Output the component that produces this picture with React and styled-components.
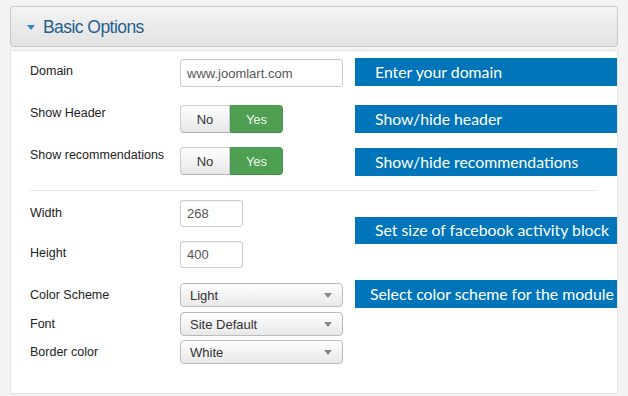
import React from "react";
import styled, { createGlobalStyle } from "styled-components";

const Global = createGlobalStyle`
  html, body { margin: 0; padding: 0; background: #f3f3f3; }
  body { font-family: "Liberation Sans", Arial, sans-serif; }
  * { box-sizing: border-box; }
`;

const Page = styled.div`
  width: 628px;
  height: 396px;
  padding: 6px 10px 0 10px;
  background: #f3f3f3;
  overflow: hidden;
`;

const Header = styled.div`
  height: 41px;
  width: 608px;
  border: 1px solid #c9c9c9;
  border-radius: 3px;
  background: linear-gradient(#f4f4f4, #e2e2e2);
  display: flex;
  align-items: center;
  padding-left: 16px;
  gap: 8px;
`;

const Caret = styled.span`
  width: 0;
  height: 0;
  border-left: 4px solid transparent;
  border-right: 4px solid transparent;
  border-top: 5px solid #2d8ac7;
  margin-top: 2px;
`;

const Title = styled.span`
  font-size: 17.5px;
  letter-spacing: -0.55px;
  color: #1f5f8f;
  line-height: 20px;
`;

const Panel = styled.div`
  margin-top: 3px;
  width: 608px;
  height: 344px;
  background: #fff;
  border: 1px solid #e3e3e3;
  padding: 7px 0 0 19px;
  display: flex;
  flex-direction: column;
`;

const Row = styled.div`
  display: grid;
  grid-template-columns: 325px 1fr;
  align-items: start;
  margin-top: ${(p) => p.$mt || 0}px;
`;

const Fields = styled.div`
  display: flex;
  flex-direction: column;
  gap: ${(p) => p.$gap || 0}px;
`;

const Field = styled.div`
  display: grid;
  grid-template-columns: 150px 175px;
  align-items: start;
  margin-top: ${(p) => p.$mt || 0}px;
`;

const Label = styled.label`
  font-size: 12.5px;
  line-height: 16px;
  color: #222;
  padding-top: ${(p) => p.$pt ?? 4}px;
`;

const TextInput = styled.div`
  width: ${(p) => p.$w}px;
  height: ${(p) => p.$h || 28}px;
  margin-top: ${(p) => p.$mt || 0}px;
  border: 1px solid #cccccc;
  border-radius: 3px;
  background: #fff;
  box-shadow: inset 0 1px 1px rgba(0, 0, 0, 0.06);
  font-size: 13px;
  color: #555;
  display: flex;
  align-items: center;
  padding-left: 6px;
`;

const Toggle = styled.div`
  display: flex;
  width: 103px;
  height: 28px;
`;

const ToggleBtn = styled.div`
  flex: ${(p) => (p.$on ? "0 0 53px" : "0 0 50px")};
  display: flex;
  align-items: center;
  justify-content: center;
  font-size: 13px;
  border: 1px solid ${(p) => (p.$on ? "#479a4a" : "#cccccc")};
  border-radius: ${(p) => (p.$on ? "0 4px 4px 0" : "4px 0 0 4px")};
  background: ${(p) =>
    p.$on ? "#4f9f52" : "linear-gradient(#ffffff, #e6e6e6)"};
  color: ${(p) => (p.$on ? "rgba(255,255,255,0.92)" : "#333")};
  border-bottom-color: ${(p) => (p.$on ? "#3f8c42" : "#b3b3b3")};
`;

const Select = styled.div`
  position: relative;
  width: 163px;
  height: 24px;
  border: 1px solid #bbbbbb;
  border-radius: 4px;
  background: linear-gradient(#ffffff, #e8e8e8);
  font-size: 13px;
  color: #333;
  display: flex;
  align-items: center;
  padding-left: 9px;
  &::after {
    content: "";
    position: absolute;
    right: 10px;
    top: 9px;
    border-left: 4px solid transparent;
    border-right: 4px solid transparent;
    border-top: 5px solid #888;
  }
`;

const Callout = styled.div`
  height: ${(p) => p.$h || 28}px;
  margin-top: ${(p) => p.$mt || 0}px;
  background: #0075b9;
  color: #fff;
  font-family: Lato, "Open Sans", sans-serif;
  font-size: 15.8px;
  display: flex;
  align-items: center;
  padding-left: ${(p) => p.$pl || 20}px;
  padding-bottom: 2px;
  white-space: nowrap;
  overflow: hidden;
`;

const Divider = styled.hr`
  margin: 14px 20px 0 0;
  border: 0;
  border-top: 1px solid #e6e6e6;
  height: 0;
`;

export default function App() {
  return (
    <Page>
      <Global />
      <Header>
        <Caret />
        <Title>Basic Options</Title>
      </Header>
      <Panel>
        <Row $mt={0}>
          <Field>
            <Label $pt={5}>Domain</Label>
            <TextInput $w={163} $mt={1}>www.joomlart.com</TextInput>
          </Field>
          <Callout>Enter your domain</Callout>
        </Row>
        <Row $mt={18}>
          <Field>
            <Label $pt={0}>Show Header</Label>
            <Toggle>
              <ToggleBtn>No</ToggleBtn>
              <ToggleBtn $on>Yes</ToggleBtn>
            </Toggle>
          </Field>
          <Callout>Show/hide header</Callout>
        </Row>
        <Row $mt={14}>
          <Field>
            <Label $pt={0}>Show recommendations</Label>
            <Toggle>
              <ToggleBtn>No</ToggleBtn>
              <ToggleBtn $on>Yes</ToggleBtn>
            </Toggle>
          </Field>
          <Callout $mt={1}>Show/hide recommendations</Callout>
        </Row>
        <Divider />
        <Row $mt={9}>
          <Fields $gap={14}>
            <Field>
              <Label $pt={5}>Width</Label>
              <TextInput $w={63} $h={27}>268</TextInput>
            </Field>
            <Field>
              <Label>Height</Label>
              <TextInput $w={63} $h={27}>400</TextInput>
            </Field>
          </Fields>
          <Callout $mt={17} $h={27}>Set size of facebook activity block</Callout>
        </Row>
        <Row $mt={15}>
          <Fields $gap={5}>
            <Field>
              <Label>Color Scheme</Label>
              <Select>Light</Select>
            </Field>
            <Field>
              <Label>Font</Label>
              <Select>Site Default</Select>
            </Field>
            <Field $mt={-1}>
              <Label>Border color</Label>
              <Select>White</Select>
            </Field>
          </Fields>
          <Callout $mt={-3} $pl={15}>Select color scheme for the module</Callout>
        </Row>
      </Panel>
    </Page>
  );
}
